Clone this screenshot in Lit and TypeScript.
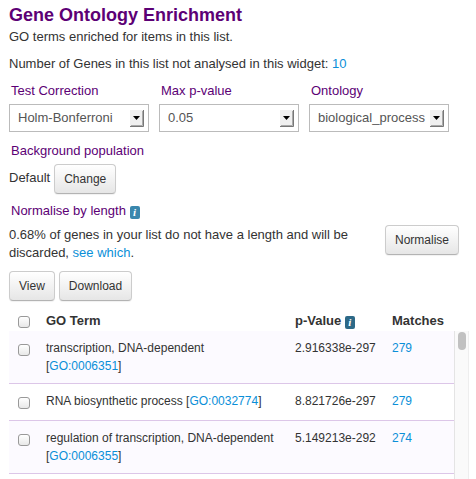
import { LitElement, html, css, svg } from "lit";
import { customElement } from "lit/decorators.js";

interface Row {
  term: string;
  id: string;
  p: string;
  matches: number;
}

const ROWS: Row[] = [
  { term: "transcription, DNA-dependent", id: "GO:0006351", p: "2.916338e-297", matches: 279 },
  { term: "RNA biosynthetic process", id: "GO:0032774", p: "8.821726e-297", matches: 279 },
  { term: "regulation of transcription, DNA-dependent", id: "GO:0006355", p: "5.149213e-292", matches: 274 },
];

const FILTERS = [
  { id: "correction", label: "Test Correction", value: "Holm-Bonferroni" },
  { id: "pvalue", label: "Max p-value", value: "0.05" },
  { id: "ontology", label: "Ontology", value: "biological_process" },
];

@customElement("app-root")
export class AppRoot extends LitElement {
  static styles = css`
    :host {
      display: block;
      background: #fff;
      color: #333;
      font: 13px/18px "Liberation Sans", Arial, sans-serif;
    }
    * {
      box-sizing: border-box;
    }
    .widget {
      display: flex;
      flex-direction: column;
      min-height: 100vh;
      padding: 3px 7px 0 9px;
    }
    h1 {
      margin: 0;
      color: #5c0075;
      font-size: 18px;
      line-height: 24px;
    }
    p {
      margin: 0;
    }
    .intro {
      margin-top: 1px;
    }
    .count {
      margin-top: 9px;
    }
    a {
      color: #0a8fd8;
      text-decoration: none;
    }
    .label {
      display: block;
      padding-left: 2px;
      color: #5c0075;
      font-size: 13px;
      font-weight: normal;
      line-height: 18px;
      margin: 0;
    }
    .filters {
      display: flex;
      gap: 10px;
      margin-top: 9px;
    }
    .filter {
      flex: 0 1 140px;
      min-width: 0;
    }
    .box {
      position: relative;
      margin-top: 4px;
    }
    select {
      appearance: none;
      display: block;
      width: 100%;
      height: 28px;
      padding: 0 8px;
      border: 1px solid #bbb;
      border-radius: 0;
      background: #fff;
      color: #555;
      font: inherit;
    }
    .arrow {
      position: absolute;
      right: 5px;
      top: 6px;
      pointer-events: none;
    }
    .background {
      margin-top: 10px;
    }
    .population {
      display: flex;
      align-items: center;
      gap: 4px;
      margin-top: 4px;
    }
    .population span {
      margin-bottom: 2px;
    }
    button {
      height: 30px;
      padding: 0 9px;
      border: 1px solid #ccc;
      border-bottom-color: #b3b3b3;
      border-radius: 4px;
      background: linear-gradient(#fff, #e6e6e6);
      box-shadow: 0 1px 1px rgba(0, 0, 0, 0.06);
      color: #333;
      font: 12px/18px "Liberation Sans", Arial, sans-serif;
      white-space: nowrap;
    }
    .normal {
      margin-top: 8px;
    }
    .info {
      display: inline-block;
      width: 10px;
      height: 13px;
      border-radius: 2px;
      background: #3a87ad;
      color: #fff;
      font: italic bold 11px/13px "Liberation Serif", serif;
      text-align: center;
      vertical-align: -1px;
    }
    .info.dark {
      background: #2d6987;
    }
    .normalise {
      display: flex;
      align-items: flex-start;
      justify-content: space-between;
      gap: 24px;
      padding-right: 10px;
      margin-top: 5px;
    }
    .normalise p {
      padding-top: 1px;
    }
    .actions {
      display: flex;
      gap: 4px;
      margin-top: 9px;
    }
    .results {
      display: flex;
      flex: 1;
      margin-top: 9px;
    }
    table {
      flex: 1;
      min-width: 0;
      align-self: flex-start;
      table-layout: fixed;
      border-collapse: separate;
      border-spacing: 0;
      font-size: 12px;
      line-height: 18px;
    }
    th {
      height: 21px;
      padding: 0 0 0 8px;
      font-size: 13px;
      text-align: left;
      vertical-align: middle;
      white-space: nowrap;
    }
    td {
      padding: 8px 0 8px 8px;
      border-bottom: 1px solid #dcc6e8;
      vertical-align: top;
    }
    td.term {
      padding-right: 8px;
    }
    tbody tr:nth-child(odd) td {
      background: #fcfaff;
    }
    .c-check {
      width: 29px;
    }
    .c-p {
      width: 97px;
    }
    .c-matches {
      width: 70px;
    }
    input {
      appearance: none;
      display: block;
      width: 12px;
      height: 12px;
      margin: 5px 0 3px 1px;
      border: 1px solid #999;
      border-radius: 3px;
      background: linear-gradient(#fff, #e8e8e8);
    }
    th input {
      margin: 2px 0 0 1px;
    }
    .rail {
      flex: 0 0 15px;
      margin-top: 21px;
      padding: 1px 2px 0 3px;
      border-left: 1px solid #e4e4e4;
      border-right: 1px solid #eee;
      background: #fafafa;
    }
    .thumb {
      width: 8px;
      height: 18px;
      border-radius: 4px;
      background: #c1c1c1;
    }
  `;

  private arrow() {
    return html`<svg class="arrow" width="14" height="17" viewBox="0 0 14 17" aria-hidden="true">
      ${svg`<rect width="14" height="17" fill="#f0f0f0" />
      <path d="M13.5 0V16.5H0" fill="none" stroke="#777" />
      <path d="M12.5 1V15.5H1" fill="none" stroke="#aaa" />
      <path d="M3 6H10L6.5 10Z" fill="#000" />`}
    </svg>`;
  }

  render() {
    return html`
      <main class="widget">
        <h1>Gene Ontology Enrichment</h1>
        <p class="intro">GO terms enriched for items in this list.</p>
        <p class="count">Number of Genes in this list not analysed in this widget: <a href="#">10</a></p>

        <div class="filters">
          ${FILTERS.map(
            (f) => html`<div class="filter">
              <label class="label" for=${f.id}>${f.label}</label>
              <div class="box">
                <select id=${f.id}><option>${f.value}</option></select>
                ${this.arrow()}
              </div>
            </div>`
          )}
        </div>

        <h2 class="label background">Background population</h2>
        <div class="population"><span>Default</span><button type="button">Change</button></div>

        <h2 class="label normal">Normalise by length <span class="info">i</span></h2>
        <div class="normalise">
          <p>
            0.68% of genes in your list do not have a length and will be discarded,
            <a href="#">see which</a>.
          </p>
          <button type="button">Normalise</button>
        </div>

        <div class="actions">
          <button type="button">View</button>
          <button type="button">Download</button>
        </div>

        <div class="results">
          <table>
            <thead>
              <tr>
                <th class="c-check"><input type="checkbox" aria-label="Select all" /></th>
                <th>GO Term</th>
                <th class="c-p">p-Value <span class="info dark">i</span></th>
                <th class="c-matches">Matches</th>
              </tr>
            </thead>
            <tbody>
              ${ROWS.map(
                (r) => html`<tr>
                  <td><input type="checkbox" aria-label=${r.term} /></td>
                  <td class="term">${r.term} [<a href="#">${r.id}</a>]</td>
                  <td>${r.p}</td>
                  <td><a href="#">${r.matches}</a></td>
                </tr>`
              )}
            </tbody>
          </table>
          <div class="rail"><div class="thumb"></div></div>
        </div>
      </main>
    `;
  }
}
